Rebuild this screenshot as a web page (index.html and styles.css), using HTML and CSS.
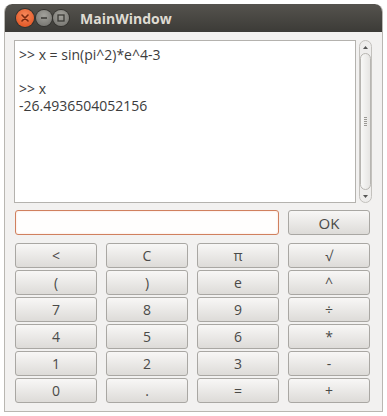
FILE: index.html
```html
<!DOCTYPE html>
<html>
<head>
<meta charset="utf-8">
<link rel="stylesheet" href="styles.css">
</head>
<body>
<div class="window">
  <div class="titlebar">
    <div class="controls">
      <span class="wbtn close"><svg width="8" height="8" viewBox="0 0 8 8"><path d="M1 1L7 7M7 1L1 7" stroke="#7a2a10" stroke-width="1.6" stroke-linecap="round"/></svg></span>
      <span class="wbtn mini"><svg width="8" height="8" viewBox="0 0 8 8"><path d="M1 4H7" stroke="#3a3935" stroke-width="1.6"/></svg></span>
      <span class="wbtn maxi"><svg width="8" height="8" viewBox="0 0 8 8"><rect x="1" y="1" width="6" height="6" fill="none" stroke="#3a3935" stroke-width="1.3"/></svg></span>
    </div>
    <div class="title">MainWindow</div>
  </div>
  <div class="content">
    <div class="editor-row">
      <div class="editor">
        <div class="line">&gt;&gt; x = sin(pi^2)*e^4-3</div>
        <div class="line">&nbsp;</div>
        <div class="line">&gt;&gt; x</div>
        <div class="line">-26.4936504052156</div>
      </div>
      <div class="scrollbar">
        <div class="step up"><svg width="5" height="3" viewBox="0 0 5 3"><path d="M0 3L2.5 0L5 3Z" fill="#555"/></svg></div>
        <div class="thumb"><span class="grip"></span></div>
        <div class="step down"><svg width="5" height="3" viewBox="0 0 5 3"><path d="M0 0L2.5 3L5 0Z" fill="#555"/></svg></div>
      </div>
    </div>
    <div class="input-row">
      <div class="input"></div>
      <div class="btn ok">OK</div>
    </div>
    <div class="grid">
      <div class="btn">&lt;</div>
      <div class="btn">C</div>
      <div class="btn">π</div>
      <div class="btn">√</div>
      <div class="btn">(</div>
      <div class="btn">)</div>
      <div class="btn">e</div>
      <div class="btn">^</div>
      <div class="btn">7</div>
      <div class="btn">8</div>
      <div class="btn">9</div>
      <div class="btn">÷</div>
      <div class="btn">4</div>
      <div class="btn">5</div>
      <div class="btn">6</div>
      <div class="btn">*</div>
      <div class="btn">1</div>
      <div class="btn">2</div>
      <div class="btn">3</div>
      <div class="btn">-</div>
      <div class="btn">0</div>
      <div class="btn">.</div>
      <div class="btn">=</div>
      <div class="btn">+</div>
    </div>
  </div>
</div>
</body>
</html>
```

FILE: styles.css
```css
html, body {
  margin: 0;
  padding: 0;
  background: #ffffff;
}
body {
  width: 387px;
  height: 416px;
  overflow: hidden;
  font-family: "Open Sans", "DejaVu Sans", sans-serif;
}
.window {
  margin: 4px 0 0 4px;
  width: 379px;
  height: 408px;
  box-sizing: border-box;
  background: #f2f1f0;
  border: 1px solid #b9b7b2;
  border-top: none;
  border-radius: 8px 8px 0 0;
  overflow: hidden;
}
.titlebar {
  height: 28px;
  margin: 0 -1px;
  background: linear-gradient(#55534e, #3c3b37);
  display: flex;
  align-items: center;
  border-radius: 8px 8px 0 0;
}
.controls {
  display: flex;
  align-items: center;
  gap: 1px;
  margin-left: 12px;
}
.wbtn {
  width: 16px;
  height: 16px;
  border-radius: 50%;
  display: flex;
  align-items: center;
  justify-content: center;
  background: radial-gradient(circle at 50% 35%, #a3a29c, #6f6e69);
  box-shadow: 0 0 0 1px #33322e;
}
.wbtn.close {
  width: 18px;
  height: 18px;
  background: radial-gradient(circle at 50% 35%, #f6895b, #df4b18);
  margin-right: 1px;
}
.title {
  margin-left: 11px;
  color: #dfdbd2;
  font-weight: bold;
  font-size: 14px;
}
.content {
  padding: 8px 0 0 9px;
}
.editor-row {
  display: flex;
  gap: 3px;
  height: 163px;
}
.editor {
  width: 342px;
  box-sizing: border-box;
  background: #ffffff;
  border: 1px solid #b4b2ae;
  padding: 5px 4px;
  font-size: 14px;
  color: #3c3c3c;
}
.line {
  line-height: 17px;
}
.scrollbar {
  width: 13px;
  box-sizing: border-box;
  border: 1px solid #c3c1bd;
  border-radius: 7px;
  background: #eeedec;
  display: flex;
  flex-direction: column;
  align-items: center;
}
.step {
  height: 12px;
  display: flex;
  align-items: center;
  justify-content: center;
}
.thumb {
  flex: 1;
  width: 11px;
  box-sizing: border-box;
  border: 1px solid #b7b5b1;
  border-radius: 6px;
  background: linear-gradient(90deg, #f8f8f7, #e6e5e3);
  display: flex;
  align-items: center;
  justify-content: center;
}
.grip {
  width: 3px;
  height: 9px;
  background: repeating-linear-gradient(#9a9894 0 1px, transparent 1px 2px);
}
.input-row {
  display: flex;
  gap: 9px;
  margin-top: 7px;
  margin-left: 1px;
}
.input {
  width: 264px;
  height: 25px;
  box-sizing: border-box;
  border: 1px solid #d0805e;
  border-radius: 3px;
  background: #fffefd;
  box-shadow: inset 0 0 2px rgba(240, 150, 110, 0.35);
}
.btn {
  width: 82px;
  height: 25px;
  box-sizing: border-box;
  border: 1px solid #a9a7a3;
  border-radius: 3px;
  background: linear-gradient(#f8f7f6, #dddbd8);
  display: flex;
  align-items: center;
  justify-content: center;
  font-size: 14px;
  color: #4a4a48;
}
.ok {
  font-size: 15px;
}
.grid {
  display: grid;
  grid-template-columns: repeat(4, 82px);
  grid-auto-rows: 25px;
  column-gap: 9px;
  row-gap: 2px;
  margin-top: 8px;
  margin-left: 1px;
}
```
